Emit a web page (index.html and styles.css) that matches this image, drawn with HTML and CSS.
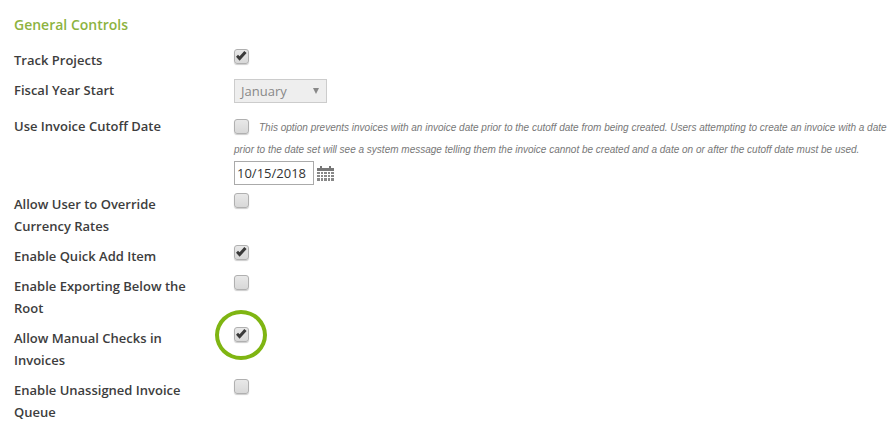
FILE: index.html
```html
<!DOCTYPE html>
<html lang="en">
<head>
<meta charset="utf-8">
<title>General Controls</title>
<link rel="stylesheet" href="styles.css">
</head>
<body>
<main class="panel">
  <h2 class="title">General Controls</h2>
  <div class="rows">
    <div class="row">
      <div class="label">Track Projects</div>
      <div class="control"><span class="check on"><svg viewBox="0 0 13 13"><path d="M1 6.7 3 4.7 4.6 6.3 9.3 1 11.6 3 4.6 10.8z"/></svg></span></div>
    </div>
    <div class="row row-select">
      <div class="label">Fiscal Year Start</div>
      <div class="control"><div class="select"><span>January</span><i class="arrow"></i></div></div>
    </div>
    <div class="row">
      <div class="label">Use Invoice Cutoff Date</div>
      <div class="control">
        <p class="help"><span class="check inline"></span>This option prevents invoices with an invoice date prior to the cutoff date from being created. Users attempting to create an invoice with a date prior to the date set will see a system message telling them the invoice cannot be created and a date on or after the cutoff date must be used.</p>
        <div class="date">
          <div class="date-input">10/15/2018</div>
          <svg class="cal" viewBox="0 0 17 16"><path class="cal-top" d="M0 2h3V0h2v2h7V0h2v2h3v3H0z"/><path class="cal-grid" d="M0 6h3v2H0zM4 6h2v2H4zM7 6h3v2H7zM11 6h2v2h-2zM14 6h3v2h-3zM0 9h3v2H0zM4 9h2v2H4zM7 9h3v2H7zM11 9h2v2h-2zM14 9h3v2h-3zM0 12h3v3H0zM4 12h2v3H4zM7 12h3v3H7zM11 12h2v3h-2zM14 12h3v3h-3z"/></svg>
        </div>
      </div>
    </div>
    <div class="row">
      <div class="label">Allow User to Override<br>Currency Rates</div>
      <div class="control"><span class="check"></span></div>
    </div>
    <div class="row">
      <div class="label">Enable Quick Add Item</div>
      <div class="control"><span class="check on"><svg viewBox="0 0 13 13"><path d="M1 6.7 3 4.7 4.6 6.3 9.3 1 11.6 3 4.6 10.8z"/></svg></span></div>
    </div>
    <div class="row">
      <div class="label">Enable Exporting Below the<br>Root</div>
      <div class="control"><span class="check"></span></div>
    </div>
    <div class="row">
      <div class="label">Allow Manual Checks in<br>Invoices</div>
      <div class="control"><span class="check on"><svg viewBox="0 0 13 13"><path d="M1 6.7 3 4.7 4.6 6.3 9.3 1 11.6 3 4.6 10.8z"/></svg></span><span class="ring"></span></div>
    </div>
    <div class="row">
      <div class="label">Enable Unassigned Invoice<br>Queue</div>
      <div class="control"><span class="check"></span></div>
    </div>
  </div>
</main>
</body>
</html>
```
FILE: styles.css
```css
html, body {
  margin: 0;
  padding: 0;
  background: #fff;
  height: 422px;
  overflow: hidden;
}
.panel {
  padding: 15px 0 0 14px;
  font-family: "Open Sans", sans-serif;
}
.title {
  margin: 0 0 14px;
  font-size: 14px;
  font-weight: 600;
  line-height: 20px;
  color: #8db33f;
}
.rows {
  display: flex;
  flex-direction: column;
  gap: 8px;
}
.row {
  display: flex;
}
.row-select {
  min-height: 28px;
}
.label {
  flex: 0 0 220px;
  font-size: 13px;
  font-weight: 600;
  line-height: 22px;
  color: #3d3d3d;
}
.control {
  position: relative;
  flex: 1;
  min-width: 0;
}
.check {
  display: block;
  box-sizing: border-box;
  width: 15px;
  height: 15px;
  border: 1px solid #b0b0b0;
  border-radius: 3px;
  background: linear-gradient(#e8e8e8, #d8d8d8);
  box-shadow: 0 1px 1px rgba(0, 0, 0, .2);
}
.check svg {
  display: block;
  width: 13px;
  height: 13px;
}
.check path {
  fill: #3a3a3a;
}
.check.inline {
  display: inline-block;
  vertical-align: -3px;
  margin-right: 10px;
}
.select {
  box-sizing: border-box;
  display: flex;
  align-items: center;
  justify-content: space-between;
  width: 93px;
  height: 24px;
  padding: 0 7px 0 6px;
  border: 1px solid #ccc;
  background: #eee;
  font-size: 13px;
  color: #888;
}
.arrow {
  width: 0;
  height: 0;
  border: 3.5px solid transparent;
  border-top: 6px solid #888;
  border-bottom: 0;
}
.help {
  margin: 0;
  width: 657px;
  padding-top: 2px;
  font-family: "Liberation Sans", Arial, sans-serif;
  font-size: 10px;
  font-style: italic;
  line-height: 22px;
  color: #777;
}
.date {
  display: flex;
  align-items: center;
  gap: 3px;
}
.date-input {
  box-sizing: border-box;
  width: 80px;
  height: 24px;
  padding-left: 2px;
  border: 1px solid #aaa;
  font-size: 13px;
  line-height: 22px;
  color: #333;
  background: #fff;
}
.cal {
  width: 17px;
  height: 16px;
  margin-top: 1px;
}
.cal-top {
  fill: #777;
}
.cal-grid {
  fill: #888;
}
.ring {
  position: absolute;
  left: -19px;
  top: -17px;
  box-sizing: border-box;
  width: 52px;
  height: 50px;
  border: 4px solid #7fb512;
  border-radius: 50%;
}
```
